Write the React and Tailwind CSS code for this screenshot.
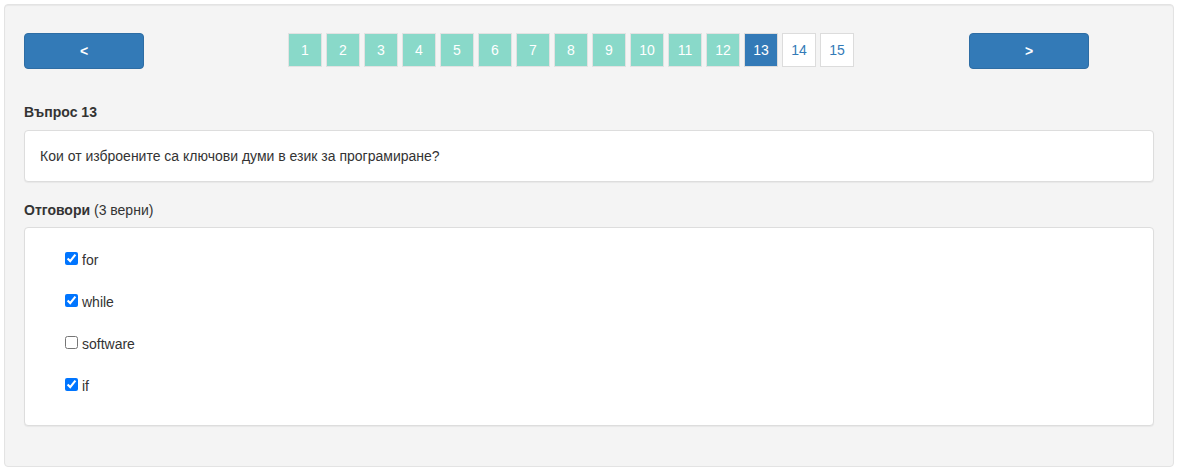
import React, { useState } from 'react';

const pages = [1, 2, 3, 4, 5, 6, 7, 8, 9, 10, 11, 12, 13, 14, 15];

export default function App() {
    const [answers, setAnswers] = useState([
        { id: 1, text: 'for', checked: true },
        { id: 2, text: 'while', checked: true },
        { id: 3, text: 'software', checked: false },
        { id: 4, text: 'if', checked: true }
    ]);

    const toggle = (id) => {
        setAnswers(answers.map(a => (a.id === id ? { ...a, checked: !a.checked } : a)));
    };

    return (
        <div className="w-[1181px] h-[473px] bg-white p-[4px] text-[14px] text-[#333] font-['Liberation_Sans',Arial,sans-serif]">
            <div className="w-[1170px] h-[463px] bg-[#f4f4f4] border border-[#e3e3e3] rounded-[4px] px-[19px] pt-[28px] shadow-[inset_0_1px_1px_rgba(0,0,0,0.05)]">
                <div className="flex items-start">
                    <button className="w-[120px] h-[36px] bg-[#337ab7] border border-[#2e6da4] rounded-[4px] text-white font-bold text-[14px]">
                        &lt;
                    </button>
                    <div className="flex gap-[4px] ml-[144px]">
                        {pages.map(p => (
                            <div
                                key={p}
                                className={`w-[34px] h-[34px] flex items-center justify-center border text-[14px] ${
                                    p === 13 ? 'bg-[#337ab7] border-[#dcdcdc] text-white' :
                                    p > 13 ? 'bg-white border-[#dcdcdc] text-[#337ab7]' :
                                    'bg-[#89d9c9] border-[#e2e2e2] text-white'
                                }`}
                            >
                                {p}
                            </div>
                        ))}
                    </div>
                    <button className="w-[120px] h-[36px] ml-[115px] bg-[#337ab7] border border-[#2e6da4] rounded-[4px] text-white font-bold text-[14px]">
                        &gt;
                    </button>
                </div>

                <div className="mt-[33px] leading-[20px] font-bold">Въпрос 13</div>
                <div className="mt-[8px] bg-white border border-[#dddddd] rounded-[4px] px-[15px] py-[15px] leading-[20px] shadow-[0_1px_1px_rgba(0,0,0,0.05)]">
                    Кои от изброените са ключови думи в език за програмиране?
                </div>

                <div className="mt-[18px] leading-[20px]">
                    <span className="font-bold">Отговори</span> (3 верни)
                </div>
                <div className="mt-[7px] bg-white border border-[#dddddd] rounded-[4px] pl-[40px] pt-[22px] pb-[29px] shadow-[0_1px_1px_rgba(0,0,0,0.05)]">
                    <div className="flex flex-col gap-[22px]">
                        {answers.map(a => (
                            <label key={a.id} className="flex items-center h-[20px] leading-[20px] cursor-pointer">
                                <input
                                    type="checkbox"
                                    checked={a.checked}
                                    onChange={() => toggle(a.id)}
                                    className="w-[13px] h-[13px] m-0 mr-[4px] -mt-[3px]"
                                />
                                {a.text}
                            </label>
                        ))}
                    </div>
                </div>
            </div>
        </div>
    );
}
